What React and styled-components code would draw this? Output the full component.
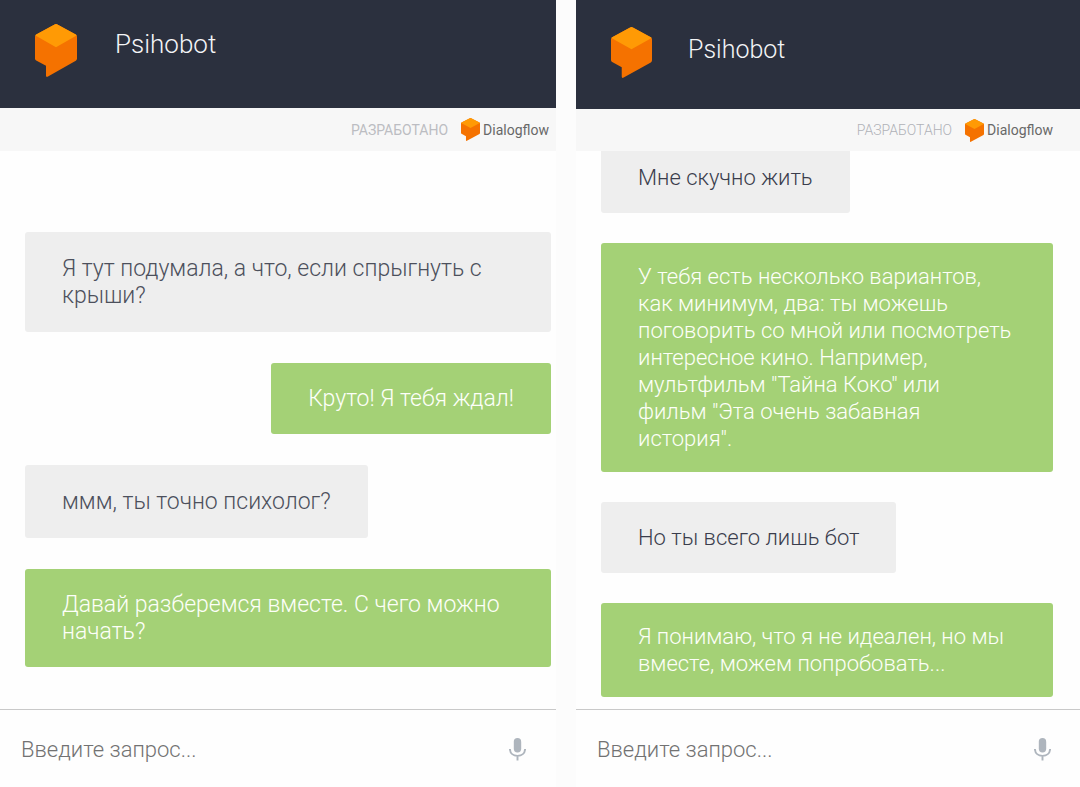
import React, { useId } from "react";
import styled, { createGlobalStyle } from "styled-components";

const GlobalStyle = createGlobalStyle`
  * { box-sizing: border-box; }
  body {
    margin: 0;
    background: #fcfcfc;
    font-family: Roboto, "Liberation Sans", sans-serif;
    font-weight: 300;
  }
`;

const Page = styled.main`
  display: grid;
  grid-template-columns: 556fr 504fr;
  gap: 20px;
  height: 100vh;
`;

const Panel = styled.section`
  display: flex;
  flex-direction: column;
  min-width: 0;
  min-height: 0;
  background: #fefefe;
`;

const Header = styled.header`
  display: flex;
  flex: none;
  align-items: flex-start;
  gap: ${(p) => (p.$compact ? 36 : 38)}px;
  height: ${(p) => (p.$compact ? 109 : 108)}px;
  padding: ${(p) => (p.$compact ? 27 : 24)}px 35px 0;
  background: #2b303e;
`;

const Title = styled.h1`
  margin: 0;
  color: #f4f5f7;
  font-size: ${(p) => (p.$compact ? 25 : 26)}px;
  font-weight: 300;
  line-height: ${(p) => (p.$compact ? 45 : 41)}px;
`;

const Credit = styled.div`
  display: flex;
  flex: none;
  align-items: center;
  justify-content: flex-end;
  height: ${(p) => (p.$compact ? 42 : 43)}px;
  padding-right: ${(p) => (p.$compact ? 27 : 7)}px;
  background: #f7f7f7;
`;

const CreditLabel = styled.span`
  margin-right: 13px;
  color: ${(p) => (p.$compact ? "#b0b2b8" : "#bcbdc2")};
  font-size: 14px;
  font-weight: ${(p) => (p.$compact ? 300 : 400)};
`;

const CreditLink = styled.a`
  display: flex;
  align-items: center;
  gap: 3px;
  color: #686868;
  font-size: 14px;
  font-weight: 400;
  text-decoration: none;
`;

const Feed = styled.div`
  display: flex;
  flex: 1;
  flex-direction: column;
  justify-content: flex-end;
  gap: ${(p) => (p.$compact ? 30 : 31)}px;
  min-height: 0;
  padding: ${(p) => (p.$compact ? "0 27px 12px 25px" : "0 5px 42px 25px")};
  overflow: hidden;
`;

const Bubble = styled.p`
  flex: none;
  align-self: flex-start;
  margin: 0;
  padding: ${(p) => (p.$compact ? 22 : 23)}px 37px;
  border-radius: 3px;
  background: #eeeeee;
  color: ${(p) => (p.$compact ? "#3a3d4c" : "#4c505c")};
  font-size: ${(p) => (p.$compact ? 22 : 23)}px;
  line-height: 27px;
  white-space: pre-line;
`;

const BotBubble = styled(Bubble)`
  align-self: flex-end;
  padding: ${(p) => (p.$compact ? 20 : 22)}px 37px;
  background: #a4d176;
  color: #fdfff9;
`;

const Composer = styled.form`
  display: flex;
  flex: none;
  align-items: center;
  height: 78px;
  padding: 2px ${(p) => (p.$compact ? 29 : 30)}px 0 21px;
  border-top: 1px solid #c9c9c9;
`;

const QueryInput = styled.input`
  flex: 1;
  min-width: 0;
  height: 40px;
  padding: 0;
  border: 0;
  outline: 0;
  background: transparent;
  color: #3a3d4c;
  font: inherit;
  font-size: 22px;
  &::placeholder { color: #727272; opacity: 1; }
`;

const MicButton = styled.button`
  display: flex;
  padding: 0;
  border: 0;
  background: none;
  cursor: pointer;
`;

function Logo({ width, height }) {
  return (
    <svg width={width} height={height} viewBox="0 0 42 53" preserveAspectRatio="none" aria-hidden="true">
      <path
        d="M19.6 .5Q21 -.3 22.4 .5L40.8 10.6Q42 11.4 42 12.8V34.5Q42 36 40.8 36.8L13 52.6Q11 53.6 11 51.5V41.8L1.2 36.5Q0 35.8 0 34.4V12.8Q0 11.4 1.2 10.6Z"
        fill="#f57200"
      />
      <path d="M19.6 .5Q21 -.3 22.4 .5L40.8 10.6Q41.3 10.9 41.6 11.4L21 23.2L.4 11.4Q.7 10.9 1.2 10.6Z" fill="#ff9a05" />
    </svg>
  );
}

function MicIcon() {
  return (
    <svg width="17" height="23" viewBox="0 0 17 23" aria-hidden="true">
      <rect x="4.8" y="0" width="7.4" height="14.4" rx="3.7" fill="#aeb5bd" />
      <path d="M.9 11C1.1 15.4 4.4 17.9 8.5 17.9S15.9 15.4 16.1 11M8.5 18V22.5" fill="none" stroke="#aeb5bd" strokeWidth="1.9" />
    </svg>
  );
}

function Chat({ compact, messages }) {
  const inputId = useId();
  return (
    <Panel aria-label="Psihobot">
      <Header $compact={compact}>
        <Logo width={compact ? 41 : 42} height={compact ? 51 : 53} />
        <Title $compact={compact}>Psihobot</Title>
      </Header>
      <Credit $compact={compact}>
        <CreditLabel $compact={compact}>РАЗРАБОТАНО</CreditLabel>
        <CreditLink href="#dialogflow">
          <Logo width={19} height={23} />
          Dialogflow
        </CreditLink>
      </Credit>
      <Feed $compact={compact}>
        {messages.map((m) => {
          const Part = m.bot ? BotBubble : Bubble;
          return <Part key={m.text} $compact={compact}>{m.text}</Part>;
        })}
      </Feed>
      <Composer $compact={compact} onSubmit={(e) => e.preventDefault()}>
        <QueryInput id={inputId} type="text" placeholder="Введите запрос..." aria-label="Введите запрос" />
        <MicButton type="button" aria-label="Голосовой ввод">
          <MicIcon />
        </MicButton>
      </Composer>
    </Panel>
  );
}

const firstChat = [
  { text: "Я тут подумала, а что, если спрыгнуть с крыши?" },
  { bot: true, text: "Круто! Я тебя ждал!" },
  { text: "ммм, ты точно психолог?" },
  { bot: true, text: "Давай разберемся вместе. С чего можно начать?" },
];

const secondChat = [
  { text: "Мне скучно жить" },
  {
    bot: true,
    text: 'У тебя есть несколько вариантов, как минимум, два: ты можешь поговорить со мной или посмотреть интересное кино. Например, мультфильм "Тайна Коко" или\nфильм "Эта очень забавная\nистория".',
  },
  { text: "Но ты всего лишь бот" },
  { bot: true, text: "Я понимаю, что я не идеален, но мы вместе, можем попробовать..." },
];

export default function App() {
  return (
    <>
      <GlobalStyle />
      <Page>
        <Chat messages={firstChat} />
        <Chat compact messages={secondChat} />
      </Page>
    </>
  );
}
